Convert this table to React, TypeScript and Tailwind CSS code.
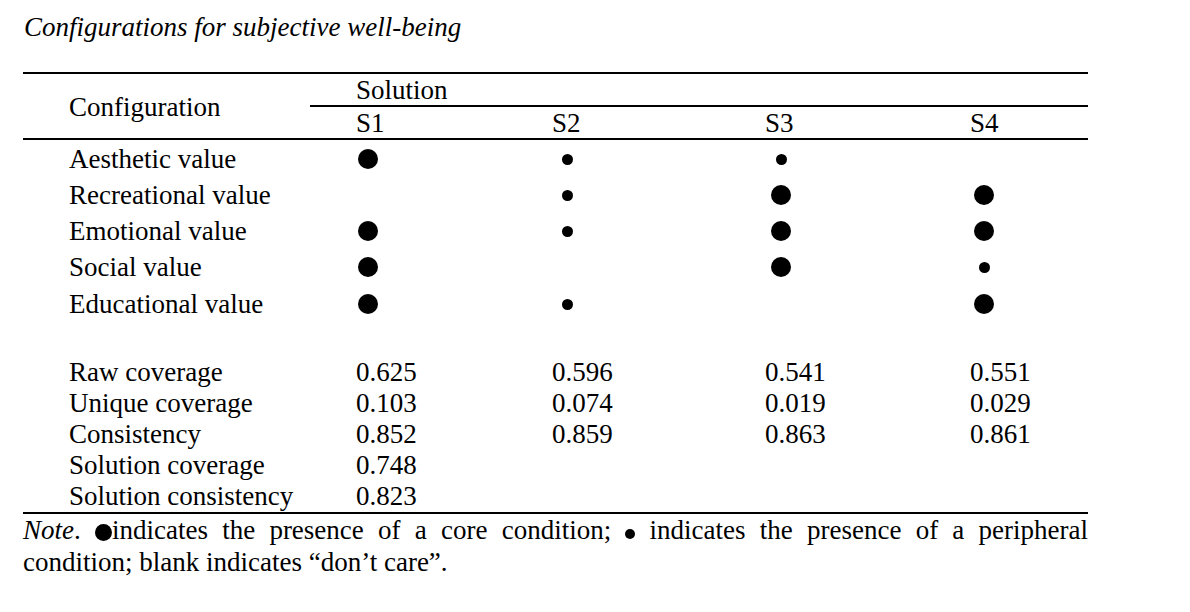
import React from "react";

const font = { fontFamily: '"Liberation Serif", "Times New Roman", serif' };

type D = 0 | 1 | 2; // 0 blank, 1 small, 2 big

const rows: { label: string; v: D[] }[] = [
  { label: "Aesthetic value", v: [2, 1, 1, 0] },
  { label: "Recreational value", v: [0, 1, 2, 2] },
  { label: "Emotional value", v: [2, 1, 2, 2] },
  { label: "Social value", v: [2, 0, 2, 1] },
  { label: "Educational value", v: [2, 1, 0, 2] },
];

const stats: { label: string; v: string[] }[] = [
  { label: "Raw coverage", v: ["0.625", "0.596", "0.541", "0.551"] },
  { label: "Unique coverage", v: ["0.103", "0.074", "0.019", "0.029"] },
  { label: "Consistency", v: ["0.852", "0.859", "0.863", "0.861"] },
  { label: "Solution coverage", v: ["0.748", "", "", ""] },
  { label: "Solution consistency", v: ["0.823", "", "", ""] },
];

const dotBoxes = ["w-[24px]", "w-[30px]", "w-[32px]", "w-[28px]"];

function Dot({ d }: { d: D }) {
  if (d === 2) return <span className="block w-[20px] h-[20px] rounded-full bg-black" />;
  if (d === 1) return <span className="block w-[11px] h-[11px] rounded-full bg-black" />;
  return null;
}

export default function App() {
  return (
    <div className="bg-white text-black w-[1190px] h-[612px] pl-[23px] text-[27px]" style={font}>
      <div className="w-[1065px]">
        <div className="pt-[12px] italic leading-[31px] pl-[1px]">Configurations for subjective well-being</div>

        <div className="mt-[29px] border-t-2 border-black grid grid-cols-[287px_778px]">
          <div className="row-span-2 flex items-center pl-[46px] leading-[31px] pt-[2px]">Configuration</div>
          <div className="pl-[46px] leading-[30px] pt-[1px] border-b-2 border-black">Solution</div>
          <div className="pl-[46px] grid grid-cols-[196px_213px_205px_118px] leading-[30px] pt-[1px]">
            <div>S1</div>
            <div>S2</div>
            <div>S3</div>
            <div>S4</div>
          </div>
        </div>

        <div className="border-t-2 border-black pt-[1px]">
          {rows.map((r, ri) => (
            <div
              key={r.label}
              className={`grid grid-cols-[333px_196px_213px_205px_118px] items-center leading-[36px] ${ri === 4 ? "h-[37px] pt-[1px]" : "h-[36px]"}`}
            >
              <div className="pl-[46px]">{r.label}</div>
              {r.v.map((d, i) => (
                <div key={i} className={`${dotBoxes[i]} flex justify-center items-center h-[36px]`}>
                  <Dot d={d} />
                </div>
              ))}
            </div>
          ))}
        </div>

        <div className="mt-[35px] border-b-2 border-black">
          {stats.map((s) => (
            <div key={s.label} className="grid grid-cols-[333px_196px_213px_205px_118px] leading-[31px]">
              <div className="pl-[46px]">{s.label}</div>
              {s.v.map((x, i) => (
                <div key={i}>{x}</div>
              ))}
            </div>
          ))}
        </div>

        <p className="leading-[32px] text-justify">
          <i>Note</i>.{" "}
          <span className="inline-block w-[17px] h-[17px] rounded-full bg-black align-[-2px]" />
          indicates the presence of a core condition;{" "}
          <span className="inline-block w-[10px] h-[10px] rounded-full bg-black align-[0px]" /> indicates the presence of a
          peripheral condition; blank indicates “don’t care”.
        </p>
      </div>
    </div>
  );
}
